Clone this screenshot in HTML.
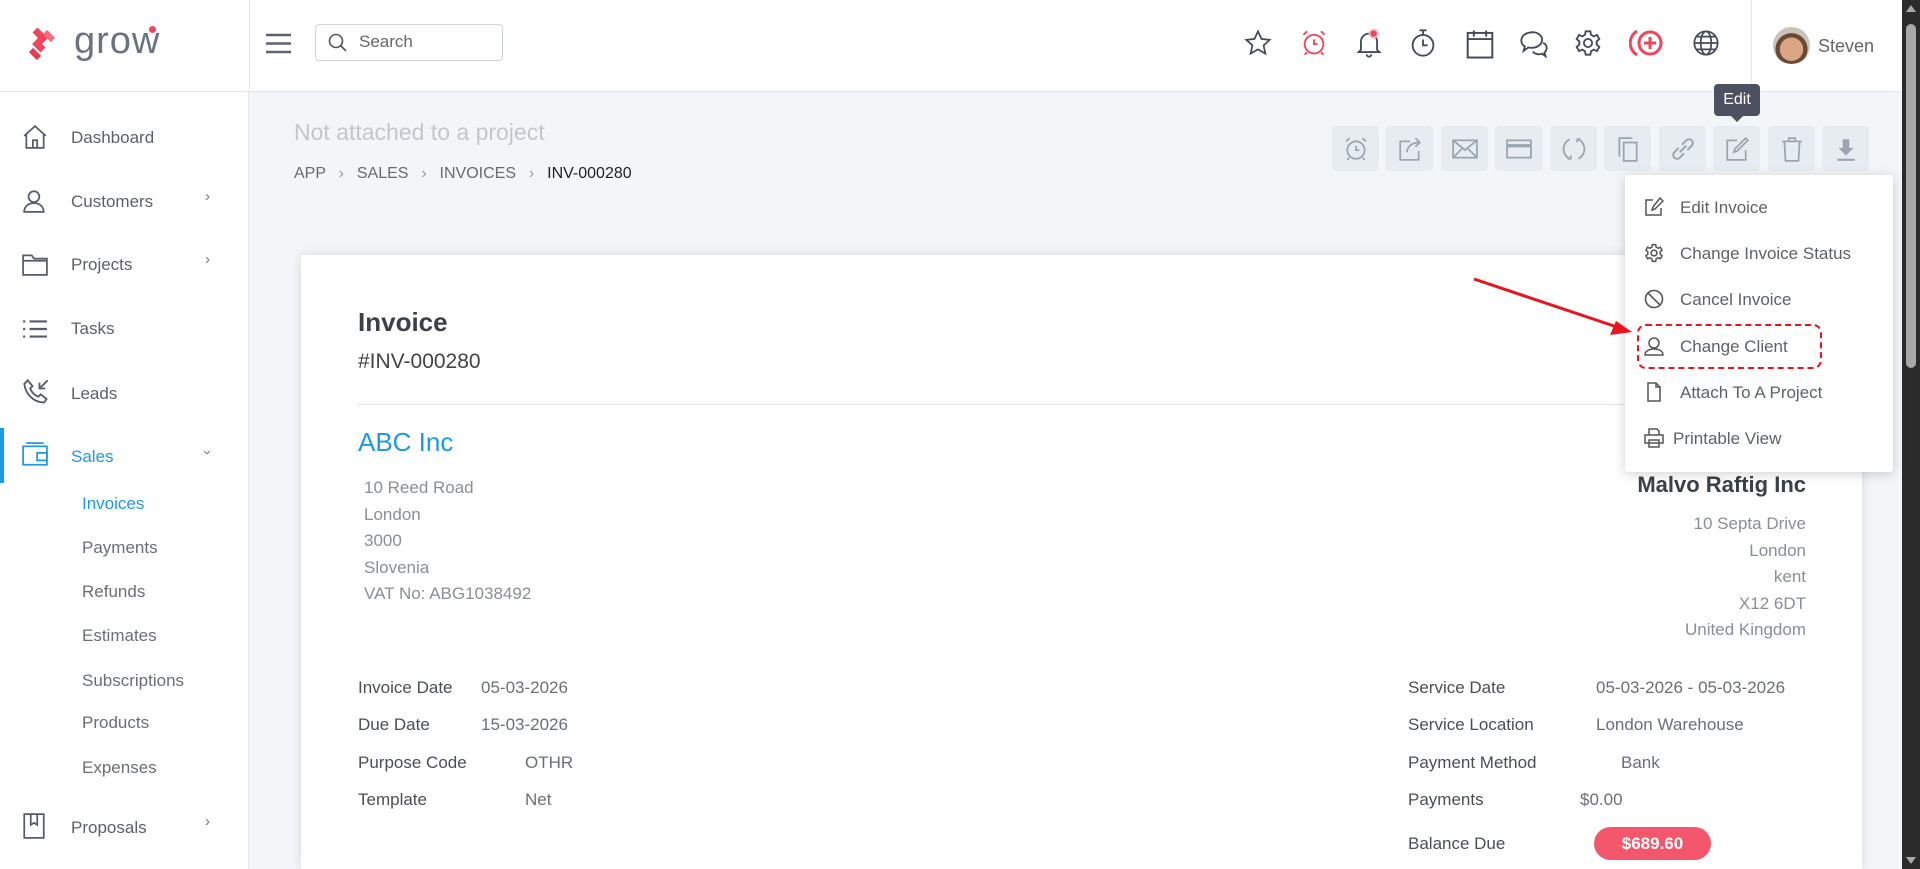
<!DOCTYPE html>
<html style="overflow:hidden;width:1920px;height:869px"><head><meta charset="utf-8"><style>
*{box-sizing:border-box;margin:0;padding:0}
html,body{overflow:hidden}
body{width:1920px;height:869px;background:#f3f6f8;font-family:"Liberation Sans",sans-serif;position:relative;color:#55595e}
.abs{position:absolute}
.hdr{left:0;top:0;width:1902px;height:92px;background:#fff;border-bottom:1px solid #e3e6ea}
.side{left:0;top:92px;width:249px;height:777px;background:#fff;border-right:1px solid #e3e6ea}
.nav{position:absolute;left:71px;font-size:17px;color:#5c6168}
.sub{position:absolute;left:82px;font-size:17px;color:#6a6f75}
.chev{position:absolute;left:205px;font-size:15px;color:#777}
.ni{position:absolute;left:22px}
.btn{position:absolute;top:126px;width:47px;height:45px;background:#e7ecf0;border-radius:4px}
.btn svg{position:absolute;left:11px;top:10px}
.lbl{position:absolute;font-size:17px;color:#4a4f55}
.val{position:absolute;font-size:17px;color:#6a6f75}
.mi{position:absolute;left:1680px;font-size:17px;color:#5d6268}
.mic{position:absolute;left:1644px}
</style></head><body>
<div class="abs hdr"></div>
<div class="abs" style="left:249px;top:0;width:1px;height:92px;background:#e3e6ea"></div>
<svg class="abs" style="left:27px;top:28px" width="36" height="34" viewBox="0 0 36 34"><path d="M8 2l8 8-6 6 6 6" fill="none" stroke="#f0465c" stroke-width="7"/><path d="M18 4l8 8" stroke="#f56b7c" stroke-width="6"/><path d="M4 22l8 8" stroke="#e83a50" stroke-width="6"/></svg>
<div class="abs" style="left:74px;top:20px;font-size:38px;color:#6b7280;letter-spacing:1px">grow</div>
<div class="abs" style="left:149px;top:26px;width:7px;height:7px;border-radius:50%;background:#f0465c"></div>
<svg class="abs" style="left:266px;top:33px" width="25" height="21"><path d="M0 2h25M0 10.5h25M0 19h25" stroke="#5c6270" stroke-width="2.5"/></svg>
<div class="abs" style="left:315px;top:24px;width:188px;height:37px;border:1px solid #cfd3d8;border-radius:4px"></div>
<svg class="abs" style="left:328px;top:33px" width="20" height="20"><circle cx="8" cy="8" r="6.5" fill="none" stroke="#555" stroke-width="1.6"/><path d="M13 13l5 5" stroke="#555" stroke-width="1.6"/></svg>
<div class="abs" style="left:359px;top:32px;font-size:17px;color:#666">Search</div>
<svg class="abs" style="left:1244px;top:29px" width="28" height="28" viewBox="0 0 24 24"><path d="M12 2l3 6.5 7 .8-5.2 4.8 1.5 7L12 17.5 5.7 21l1.5-7L2 9.3l7-.8z" fill="none" stroke="#444b58" stroke-width="1.5"/></svg>
<svg class="abs" style="left:1300px;top:29px" width="28" height="28" viewBox="0 0 24 24" fill="none" stroke="#f0465c" stroke-width="1.6"><circle cx="12" cy="13" r="8"/><path d="M12 9v4h3M3 5l3-3M21 5l-3-3M6 20l-2 2M18 20l2 2"/></svg>
<svg class="abs" style="left:1355px;top:29px" width="28" height="30" viewBox="0 0 24 26" fill="none" stroke="#444b58" stroke-width="1.6"><path d="M5 18V11a7 7 0 0114 0v7l2 2H3z M10 22a2 2 0 004 0"/><circle cx="16" cy="4" r="3.5" fill="#f0465c" stroke="#f9b6bf" stroke-width="1.5"/></svg>
<svg class="abs" style="left:1409px;top:28px" width="28" height="30" viewBox="0 0 24 26" fill="none" stroke="#444b58" stroke-width="1.6"><circle cx="12" cy="15" r="9"/><path d="M12 10v5h4M9 2h6M12 2v4"/></svg>
<svg class="abs" style="left:1465px;top:28px" width="30" height="32" viewBox="0 0 24 26" fill="none" stroke="#444b58" stroke-width="1.6"><rect x="2" y="4" width="20" height="20"/><path d="M2 9h20M7 2v5M17 2v5"/></svg>
<svg class="abs" style="left:1519px;top:29px" width="30" height="30" viewBox="0 0 26 26" fill="none" stroke="#444b58" stroke-width="1.6"><path d="M11 3C6 3 2 6 2 10c0 2 1 4 3 5l-1 4 4-3c1 .3 2 .3 3 .3 5 0 9-3 9-7s-4-6.6-9-6.6z"/><path d="M21 12c2 1 3 2.5 3 4.5 0 1.5-1 3-2 4l1 3-3-2c-3 1-7 0-8-2"/></svg>
<svg class="abs" style="left:1574px;top:29px" width="28" height="28" viewBox="0 0 24 24" fill="none" stroke="#444b58" stroke-width="1.6"><circle cx="12" cy="12" r="3.5"/><path d="M10 2h4l.6 3 2.3 1.3 2.8-1.2 2 3.5-2.3 2v2.8l2.3 2-2 3.5-2.8-1.2L14.6 19l-.6 3h-4l-.6-3-2.3-1.3-2.8 1.2-2-3.5 2.3-2v-2.8l-2.3-2 2-3.5 2.8 1.2L9.4 5z"/></svg>
<svg class="abs" style="left:1629px;top:27px" width="36" height="32" viewBox="0 0 36 32" fill="none" stroke="#f0465c" stroke-width="3"><path d="M8 4a14 14 0 000 24"/><circle cx="21" cy="16" r="11"/><path d="M21 10v12M15 16h12"/></svg>
<svg class="abs" style="left:1692px;top:29px" width="28" height="28" viewBox="0 0 24 24" fill="none" stroke="#444b58" stroke-width="1.5"><circle cx="12" cy="12" r="10"/><ellipse cx="12" cy="12" rx="4.5" ry="10"/><path d="M2 12h20M4 6.5h16M4 17.5h16"/></svg>
<div class="abs" style="left:1751px;top:0;width:1px;height:92px;background:#e3e6ea"></div>
<div class="abs" style="left:1773px;top:27px;width:37px;height:37px;border-radius:50%;background:radial-gradient(circle at 50% 60%,#d9a585 0 40%,#6b4a35 41% 55%,#c9c3bb 56%)"></div>
<div class="abs" style="left:1818px;top:36px;font-size:18px;color:#666">Steven</div>
<div class="abs" style="left:1902px;top:0;width:18px;height:869px;background:#2b2b2b"></div>
<div class="abs" style="left:1906px;top:24px;width:10px;height:344px;border-radius:5px;background:#a8a8a8"></div>
<div class="abs" style="left:1906px;top:5px;width:0;height:0;border-left:5px solid transparent;border-right:5px solid transparent;border-bottom:7px solid #a8a8a8"></div>
<div class="abs" style="left:1906px;top:857px;width:0;height:0;border-left:5px solid transparent;border-right:5px solid transparent;border-top:7px solid #a8a8a8"></div>
<div class="abs side"></div>
<svg class="ni" style="top:124px" width="26" height="26" viewBox="0 0 24 24" fill="none" stroke="#555c6a" stroke-width="1.6"><path d="M2 11L12 2l10 9M4 9v13h16V9M10 22v-7h4v7"/></svg>
<div class="nav" style="top:128px">Dashboard</div>
<svg class="ni" style="top:188px" width="26" height="26" viewBox="0 0 24 24" fill="none" stroke="#555c6a" stroke-width="1.6"><circle cx="11" cy="8" r="5"/><path d="M2 22c0-5 4-8 9-8s9 3 9 8z"/></svg>
<div class="nav" style="top:192px">Customers</div><div class="chev" style="top:188px">&#x203A;</div>
<svg class="ni" style="top:252px" width="26" height="24" viewBox="0 0 24 22" fill="none" stroke="#555c6a" stroke-width="1.6"><path d="M1 3h8l2 3h12v15H1z M1 8h22"/></svg>
<div class="nav" style="top:255px">Projects</div><div class="chev" style="top:251px">&#x203A;</div>
<svg class="ni" style="top:318px" width="26" height="22" viewBox="0 0 24 20" fill="none" stroke="#555c6a" stroke-width="2"><path d="M1 3h2M7 3h16M1 10h2M7 10h16M1 17h2M7 17h16"/></svg>
<div class="nav" style="top:319px">Tasks</div>
<svg class="ni" style="top:378px" width="28" height="28" viewBox="0 0 24 24" fill="none" stroke="#555c6a" stroke-width="1.6"><path d="M5 2l4 5-2 2c1 3 4 6 7 7l2-2 5 4-2 3C10 21 3 14 2 5zM22 2l-7 7M15 4v5h5"/></svg>
<div class="nav" style="top:384px">Leads</div>
<div class="abs" style="left:0;top:428px;width:4px;height:55px;background:#1e9ae0"></div>
<svg class="ni" style="top:442px" width="26" height="26" viewBox="0 0 24 24" fill="none" stroke="#1e9ae0" stroke-width="1.6"><rect x="1" y="4" width="22" height="17"/><path d="M4 1h16M14 10h9v7h-9z"/></svg>
<div class="nav" style="top:447px;color:#1e9ae0">Sales</div><div class="chev" style="top:444px;transform:rotate(90deg)">&#x203A;</div>
<div class="sub" style="top:494px;color:#1e9ae0">Invoices</div>
<div class="sub" style="top:538px">Payments</div>
<div class="sub" style="top:582px">Refunds</div>
<div class="sub" style="top:626px">Estimates</div>
<div class="sub" style="top:671px">Subscriptions</div>
<div class="sub" style="top:713px">Products</div>
<div class="sub" style="top:758px">Expenses</div>
<svg class="ni" style="top:813px" width="24" height="26" viewBox="0 0 22 24" fill="none" stroke="#555c6a" stroke-width="1.6"><path d="M2 1h18v22H2zM8 1v10l3-2 3 2V1"/></svg>
<div class="nav" style="top:818px">Proposals</div><div class="chev" style="top:813px">&#x203A;</div>
<div class="abs" style="left:294px;top:119px;font-size:23px;color:#c3c7cc">Not attached to a project</div>
<div class="abs" style="left:294px;top:165px;font-size:16px;color:#666b70;word-spacing:2px">APP &nbsp;<span style="color:#999">&#x203A;</span>&nbsp; SALES &nbsp;<span style="color:#999">&#x203A;</span>&nbsp; INVOICES &nbsp;<span style="color:#999">&#x203A;</span>&nbsp; <span style="color:#222">INV-000280</span></div>
<div class="btn" style="left:1332px"><svg width="26" height="26" viewBox="0 0 24 24" fill="none" stroke="#9aa5b0" stroke-width="1.6"><circle cx="12" cy="13" r="8"/><path d="M12 9v4h3M3 5l3-3M21 5l-3-3M6 20l-2 2M18 20l2 2"/></svg></div>
<div class="btn" style="left:1386px"><svg width="26" height="26" viewBox="0 0 24 24" fill="none" stroke="#9aa5b0" stroke-width="1.6"><path d="M12 5H3v17h17v-8M9 15c1-6 5-9 12-9M17 2l4 4-4 4"/></svg></div>
<div class="btn" style="left:1441px"><svg width="26" height="26" viewBox="0 0 24 24" fill="none" stroke="#9aa5b0" stroke-width="1.6"><rect x="1" y="4" width="22" height="16"/><path d="M1 4l11 9 11-9M1 20l8-8M23 20l-8-8"/></svg></div>
<div class="btn" style="left:1495px"><svg width="26" height="26" viewBox="0 0 24 24" fill="none" stroke="#9aa5b0" stroke-width="1.6"><rect x="1" y="4" width="22" height="16"/><path d="M1 9h22" stroke-width="3"/></svg></div>
<div class="btn" style="left:1550px"><svg width="26" height="26" viewBox="0 0 24 24" fill="none" stroke="#9aa5b0" stroke-width="1.6"><path d="M8 3a10 10 0 000 18M16 3a10 10 0 010 18M6 21h3v-3M18 3h-3v3"/></svg></div>
<div class="btn" style="left:1604px"><svg width="26" height="26" viewBox="0 0 24 24" fill="none" stroke="#9aa5b0" stroke-width="1.6"><rect x="8" y="6" width="12" height="17"/><path d="M4 19V2h12"/></svg></div>
<div class="btn" style="left:1659px"><svg width="26" height="26" viewBox="0 0 24 24" fill="none" stroke="#9aa5b0" stroke-width="1.8"><path d="M9 15l6-6M8 11l-4 4a3.5 3.5 0 005 5l4-4M16 13l4-4a3.5 3.5 0 00-5-5l-4 4"/></svg></div>
<div class="btn" style="left:1713px"><svg width="26" height="26" viewBox="0 0 24 24" fill="none" stroke="#9aa5b0" stroke-width="1.6"><path d="M12 4H3v18h17v-9M20 2l2 2-10 10-3 1 1-3z"/></svg></div>
<div class="btn" style="left:1768px"><svg width="26" height="26" viewBox="0 0 24 24" fill="none" stroke="#9aa5b0" stroke-width="1.6"><path d="M3 5h18M9 5V2h6v3M5 5l1 18h12l1-18"/></svg></div>
<div class="btn" style="left:1822px"><svg width="26" height="26" viewBox="0 0 24 24" fill="#9aa5b0"><path d="M9 3h6v8h4l-7 7-7-7h4zM4 21h16v2H4z"/></svg></div>
<div class="abs" style="left:1714px;top:84px;width:46px;height:32px;background:#4b5160;border-radius:4px;color:#fff;font-size:16px;text-align:center;line-height:32px">Edit</div>
<div class="abs" style="left:1731px;top:116px;border-left:6px solid transparent;border-right:6px solid transparent;border-top:6px solid #4b5160"></div>
<div class="abs" style="left:301px;top:255px;width:1561px;height:614px;background:#fff;box-shadow:0 0 10px rgba(0,0,0,.12)"></div>
<div class="abs" style="left:358px;top:307px;font-size:26px;font-weight:bold;color:#3b4148">Invoice</div>
<div class="abs" style="left:358px;top:350px;font-size:21px;color:#444">#INV-000280</div>
<div class="abs" style="left:358px;top:404px;width:1448px;height:1px;background:#e2e5e8"></div>
<div class="abs" style="left:358px;top:427px;font-size:26px;color:#1e9ae0">ABC Inc</div>
<div class="abs" style="left:364px;top:475px;font-size:17px;color:#8a8f95;line-height:26.5px">10 Reed Road<br>London<br>3000<br>Slovenia<br>VAT No: ABG1038492</div>
<div class="abs" style="left:1500px;top:472px;width:306px;text-align:right;font-size:22px;font-weight:bold;color:#3b4148">Malvo Raftig Inc</div>
<div class="abs" style="left:1500px;top:511px;width:306px;text-align:right;font-size:17px;color:#8a8f95;line-height:26.5px">10 Septa Drive<br>London<br>kent<br>X12 6DT<br>United Kingdom</div>
<div class="lbl" style="left:358px;top:678px">Invoice Date</div><div class="val" style="left:481px;top:678px">05-03-2026</div>
<div class="lbl" style="left:358px;top:715px">Due Date</div><div class="val" style="left:481px;top:715px">15-03-2026</div>
<div class="lbl" style="left:358px;top:753px">Purpose Code</div><div class="val" style="left:525px;top:753px">OTHR</div>
<div class="lbl" style="left:358px;top:790px">Template</div><div class="val" style="left:525px;top:790px">Net</div>
<div class="lbl" style="left:1408px;top:678px">Service Date</div><div class="val" style="left:1596px;top:678px">05-03-2026 - 05-03-2026</div>
<div class="lbl" style="left:1408px;top:715px">Service Location</div><div class="val" style="left:1596px;top:715px">London Warehouse</div>
<div class="lbl" style="left:1408px;top:753px">Payment Method</div><div class="val" style="left:1621px;top:753px">Bank</div>
<div class="lbl" style="left:1408px;top:790px">Payments</div><div class="val" style="left:1580px;top:790px">$0.00</div>
<div class="lbl" style="left:1408px;top:834px">Balance Due</div>
<div class="abs" style="left:1594px;top:827px;width:117px;height:33px;border-radius:17px;background:#f4566c;color:#fff;font-weight:bold;font-size:17px;text-align:center;line-height:33px">$689.60</div>
<div class="abs" style="left:1625px;top:175px;width:268px;height:297px;background:#fff;border-radius:3px;box-shadow:0 2px 12px rgba(0,0,0,.18)"></div>
<svg class="mic" style="top:197px" width="20" height="20" viewBox="0 0 20 20" fill="none" stroke="#555" stroke-width="1.5"><path d="M9 3H2v15h15v-7M16 1l3 3-8 8-3 1 1-3z"/></svg>
<div class="mi" style="top:198px">Edit Invoice</div>
<svg class="mic" style="top:243px" width="20" height="20" viewBox="0 0 24 24" fill="none" stroke="#555" stroke-width="1.8"><circle cx="12" cy="12" r="3.5"/><path d="M10 2h4l.6 3 2.3 1.3 2.8-1.2 2 3.5-2.3 2v2.8l2.3 2-2 3.5-2.8-1.2L14.6 19l-.6 3h-4l-.6-3-2.3-1.3-2.8 1.2-2-3.5 2.3-2v-2.8l-2.3-2 2-3.5 2.8 1.2L9.4 5z"/></svg>
<div class="mi" style="top:244px">Change Invoice Status</div>
<svg class="mic" style="top:289px" width="20" height="20" viewBox="0 0 20 20" fill="none" stroke="#555" stroke-width="1.6"><circle cx="10" cy="10" r="8.5"/><path d="M4 4l12 12"/></svg>
<div class="mi" style="top:290px">Cancel Invoice</div>
<div class="abs" style="left:1637px;top:324px;width:185px;height:45px;border:2px dashed #e8141e;border-radius:9px"></div>
<svg class="mic" style="top:336px" width="20" height="20" viewBox="0 0 20 20" fill="none" stroke="#555" stroke-width="1.5"><circle cx="10" cy="7" r="5"/><path d="M1 19c0-4 4-6 9-6s9 2 9 6z"/></svg>
<div class="mi" style="top:337px">Change Client</div>
<svg class="mic" style="top:382px" width="20" height="20" viewBox="0 0 20 20" fill="none" stroke="#555" stroke-width="1.5"><path d="M4 1h8l4 4v14H4zM12 1v4h4"/></svg>
<div class="mi" style="top:383px">Attach To A Project</div>
<svg class="mic" style="top:428px" width="20" height="20" viewBox="0 0 20 20" fill="none" stroke="#555" stroke-width="1.5"><path d="M5 7V1h8l2 2v4M1 7h18v8H1zM5 12h10v7H5z"/></svg>
<div class="mi" style="top:429px;left:1673px">Printable View</div>
<svg class="abs" style="left:1460px;top:270px" width="180" height="75"><path d="M14 9L160 58" stroke="#e8141e" stroke-width="3"/><path d="M172 62l-22 3 6-14z" fill="#e8141e"/></svg>
</body></html>
